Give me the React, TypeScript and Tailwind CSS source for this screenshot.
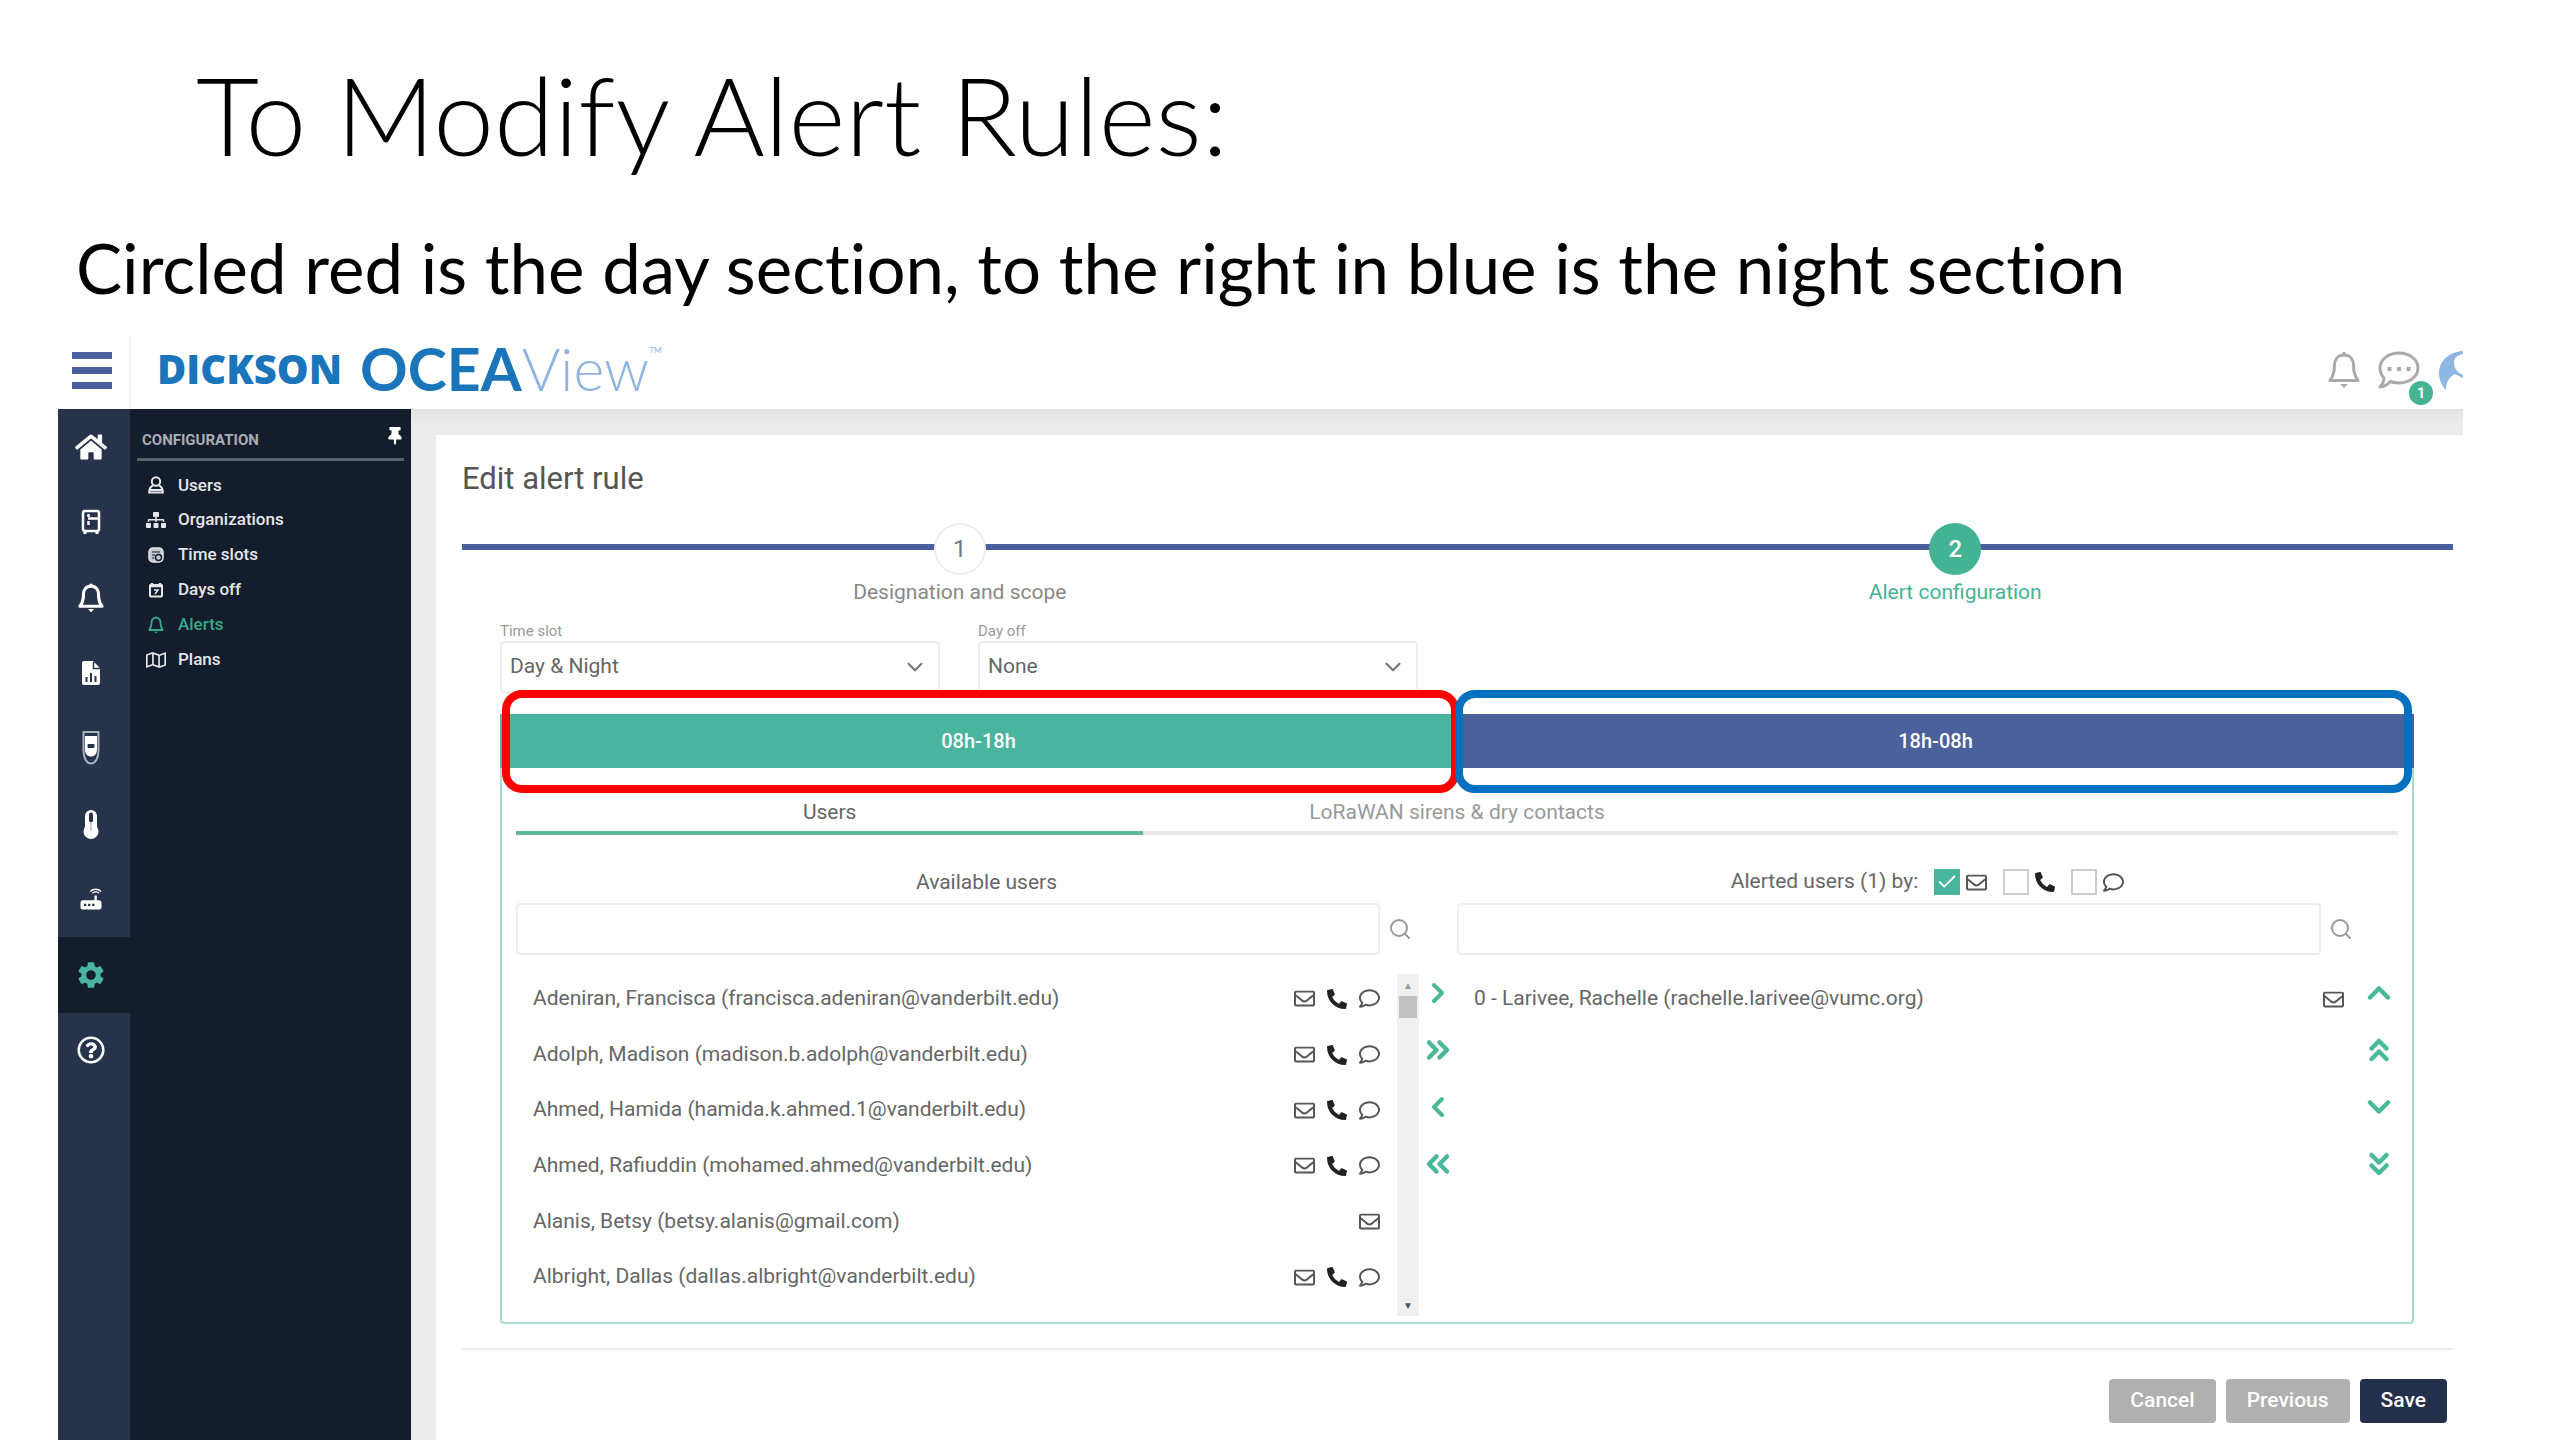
import { useState } from 'react'
import type { ReactNode } from 'react'
import {
  FaHome,
  FaPhoneAlt,
  FaRegComment,
  FaRegEnvelope,
  FaRegMap,
  FaRegQuestionCircle,
  FaSitemap,
  FaThumbtack,
} from 'react-icons/fa'
import { MdRouter, MdSettings } from 'react-icons/md'
import {
  Check,
  ChevronDown,
  ChevronLeft,
  ChevronRight,
  ChevronUp,
  ChevronsDown,
  ChevronsLeft,
  ChevronsRight,
  ChevronsUp,
  Search,
} from 'lucide-react'

type Channel = 'mail' | 'phone' | 'chat'

const availableUsers: { name: string; channels: Channel[] }[] = [
  { name: 'Adeniran, Francisca (francisca.adeniran@vanderbilt.edu)', channels: ['mail', 'phone', 'chat'] },
  { name: 'Adolph, Madison (madison.b.adolph@vanderbilt.edu)', channels: ['mail', 'phone', 'chat'] },
  { name: 'Ahmed, Hamida (hamida.k.ahmed.1@vanderbilt.edu)', channels: ['mail', 'phone', 'chat'] },
  { name: 'Ahmed, Rafiuddin (mohamed.ahmed@vanderbilt.edu)', channels: ['mail', 'phone', 'chat'] },
  { name: 'Alanis, Betsy (betsy.alanis@gmail.com)', channels: ['mail'] },
  { name: 'Albright, Dallas (dallas.albright@vanderbilt.edu)', channels: ['mail', 'phone', 'chat'] },
]

function BellIcon({ className, strokeWidth = 2 }: { className?: string; strokeWidth?: number }) {
  return (
    <svg viewBox="0 0 32 38" className={className} fill="none" stroke="currentColor" strokeWidth={strokeWidth} strokeLinejoin="round">
      <path d="M16 1v3M16 4C9.500 4 6.500 9 6.500 14.500 6.500 22 5 25.500 2 29.500h28c-3-4-4.500-7.500-4.500-15C25.500 9 22.500 4 16 4z" />
      <path d="M12 33h8l-4 4z" fill="currentColor" stroke="none" />
    </svg>
  )
}

function FridgeIcon() {
  return (
    <svg viewBox="0 0 20 26" className="h-[26px] w-5" fill="none" stroke="currentColor" strokeWidth="2.500">
      <rect x="2" y="2" width="16" height="20" rx="2" />
      <path d="M7 9.500h10M7.500 5v3M7.500 12v4" />
      <path d="M4 22v3M16 22v3" strokeWidth="3" />
    </svg>
  )
}

function ReportIcon() {
  return (
    <svg viewBox="0 0 20 26" className="h-[26px] w-5">
      <path d="M3 1h9l7 7v15a2 2 0 0 1-2 2H3a2 2 0 0 1-2-2V3a2 2 0 0 1 2-2z" fill="currentColor" />
      <path d="M12.500 2v6.500H19" fill="none" stroke="#27324b" strokeWidth="1.500" />
      <path d="M5.500 17v5M10 13v9M14.500 16v6" stroke="#27324b" strokeWidth="2" />
    </svg>
  )
}

function SensorIcon() {
  return (
    <svg viewBox="0 0 18 36" className="h-9 w-[18px]">
      <path d="M1.500 2h15v18c0 8-3 13.500-7.500 13.500S1.500 28 1.500 20z" fill="none" stroke="#a9b0be" strokeWidth="2" />
      <path d="M3 6h12v13c0 5-2.500 7.500-6 7.500S3 24 3 19z" fill="currentColor" />
      <rect x="5.500" y="14" width="7" height="4" rx="1" fill="#27324b" />
    </svg>
  )
}

function ThermometerIcon() {
  return (
    <svg viewBox="0 0 16 30" className="h-[30px] w-4">
      <path d="M8 1a6 6 0 0 1 6 6v11a7.500 7.500 0 1 1-12 0V7a6 6 0 0 1 6-6z" fill="currentColor" />
      <path d="M8 5.500v6" stroke="#27324b" strokeWidth="4" strokeLinecap="round" />
      <path d="M8 13v9" stroke="#c9ced8" strokeWidth="2" />
    </svg>
  )
}

function PersonIcon() {
  return (
    <svg viewBox="0 0 16 18" className="h-[18px] w-4" fill="none" stroke="currentColor" strokeWidth="2">
      <circle cx="8" cy="5.500" r="4.200" />
      <path d="M5 9.500C2.500 10.500 1.200 13 1.200 16.500h13.600c0-3.500-1.300-6-3.800-7M2 14h12" />
    </svg>
  )
}

function CalendarIcon({ clock = false }: { clock?: boolean }) {
  return (
    <svg viewBox="0 0 16 16" className="size-4">
      {clock ? (
        <>
          <rect x="1" y="1" width="14" height="14" rx="4" fill="#c4c8cf" stroke="currentColor" strokeWidth="1.500" />
          <path d="M4 5h8" stroke="#141d2b" strokeWidth="1" />
          <circle cx="10.500" cy="10.500" r="3" fill="none" stroke="#141d2b" strokeWidth="1.500" />
          <path d="M4 8h3M4 11h2" stroke="#141d2b" strokeWidth="1" />
        </>
      ) : (
        <>
          <rect x="2" y="3" width="12" height="11.500" rx="1" fill="none" stroke="currentColor" strokeWidth="2" />
          <path d="M1 4h14M4 1v4M12 1v4" stroke="currentColor" strokeWidth="2.500" />
          <path d="M6 8h4l-3 4" fill="none" stroke="currentColor" strokeWidth="1.500" />
        </>
      )}
    </svg>
  )
}

const railItems: { label: string; icon: ReactNode; active?: boolean }[] = [
  { label: 'Home', icon: <FaHome className="size-8" /> },
  { label: 'Equipment', icon: <FridgeIcon /> },
  { label: 'Alarms', icon: <BellIcon className="h-[30px] w-[26px]" strokeWidth={4} /> },
  { label: 'Reports', icon: <ReportIcon /> },
  { label: 'Modules', icon: <SensorIcon /> },
  { label: 'Sensors', icon: <ThermometerIcon /> },
  { label: 'Gateways', icon: <MdRouter className="size-7" /> },
  { label: 'Configuration', icon: <MdSettings className="size-8" />, active: true },
  { label: 'Help', icon: <FaRegQuestionCircle className="size-7" /> },
]

const menuItems: { label: string; icon: ReactNode; active?: boolean }[] = [
  { label: 'Users', icon: <PersonIcon /> },
  { label: 'Organizations', icon: <FaSitemap className="size-5" /> },
  { label: 'Time slots', icon: <CalendarIcon clock /> },
  { label: 'Days off', icon: <CalendarIcon /> },
  { label: 'Alerts', icon: <BellIcon className="h-[18px] w-4" strokeWidth={4} />, active: true },
  { label: 'Plans', icon: <FaRegMap className="size-5" /> },
]

function ChannelIcon({ channel }: { channel: Channel }) {
  if (channel === 'mail') return <FaRegEnvelope className="size-[21px] text-[#555]" />
  if (channel === 'phone') return <FaPhoneAlt className="size-5 text-[#222]" />
  return <FaRegComment className="size-[21px] text-[#555]" />
}

function TopBar() {
  return (
    <header className="flex h-[73px] bg-white">
      <div className="flex w-[73px] items-center border-r-2 border-[#f2f2f2] pb-1 pl-[14px]">
        <button aria-label="Menu" className="flex w-10 flex-col gap-2">
          <span className="h-[7px] bg-[#4a609c]" />
          <span className="h-[7px] bg-[#4a609c]" />
          <span className="h-[7px] bg-[#4a609c]" />
        </button>
      </div>
      <a href="#" className="flex items-center pb-2 pl-[26px] leading-[64px]">
        <span className="font-['Open_Sans'] text-[40px] font-extrabold text-[#1b75bb]">DICKSON</span>
        <span className="ml-[18px] font-['Lato'] text-[59px] font-bold text-[#1b75bb]">OCEA</span>
        <span className="font-['Lato'] text-[59px] font-light text-[#8fb4e0]">View</span>
        <sup className="self-start font-['Lato'] text-[8px] leading-[36px] text-[#8fb4e0]">TM</sup>
      </a>
      <div className="ml-auto flex items-center gap-[18px] pb-[6px] text-[#aaa]">
        <button aria-label="Alarms">
          <BellIcon className="h-[38px] w-8" strokeWidth={3} />
        </button>
        <button aria-label="Messages" className="relative">
          <svg viewBox="0 0 42 38" className="h-[38px] w-[42px]" fill="none" stroke="currentColor" strokeWidth="3">
            <path d="M21 2c10.500 0 19 6.500 19 15s-8.500 15-19 15c-3 0-6-.5-8.500-1.500C9 34 5 36 2 36c2.500-3 4-6 4-9-2.500-2.700-4-6-4-10C2 8.500 10.500 2 21 2z" strokeLinejoin="round" />
            <path d="M9.500 18h4M19 18h4M28.500 18h4" strokeWidth="4" />
          </svg>
          <span className="absolute top-[30px] left-[31px] size-6 rounded-full bg-[#43b394] text-[15px] leading-6 font-bold text-white">1</span>
        </button>
        <svg viewBox="0 0 25 42" className="h-[42px] w-[25px]" aria-hidden="true">
          <path d="M25 2C10 3 1 13 1 24c0 7 3 13 7 17 0-8 3-13 9-16 3 1 5 3 8 4v-3c-4-1.500-9-5.500-9-12.500 0-4 3-7.500 9-8.500z" fill="#8fb6e2" />
        </svg>
      </div>
    </header>
  )
}

function SideNav() {
  return (
    <>
      <nav aria-label="Main" className="w-[72px] bg-[#27324b]">
        <ul className="flex h-[679px] flex-col">
          {railItems.map((item) => (
            <li key={item.label} className={item.active ? 'flex-1 bg-[#141d2b] text-[#4ab59e]' : 'flex-1 text-white'}>
              <a href="#" aria-label={item.label} className="flex h-full items-center justify-center pr-[6px]">
                {item.icon}
              </a>
            </li>
          ))}
        </ul>
      </nav>
      <nav aria-label="Configuration" className="w-[281px] bg-[#141d2b] px-[7px] text-[#e4e6ea]">
        <div className="flex h-[52px] items-start justify-between border-b-3 border-[#5b616b] pt-[18px] pl-[5px]">
          <h2 className="text-[15px] leading-[26px] font-bold text-[#a9adb5]">CONFIGURATION</h2>
          <button aria-label="Pin menu">
            <FaThumbtack className="size-[18px] text-white" />
          </button>
        </div>
        <ul className="mt-[7px] flex h-[209px] flex-col">
          {menuItems.map((item) => (
            <li key={item.label} className="flex-1">
              <a href="#" className={item.active ? 'flex h-full items-center text-[#36a88a]' : 'flex h-full items-center'}>
                <span className="flex w-[41px] justify-center pr-1">{item.icon}</span>
                <span className="text-[17px] font-medium">{item.label}</span>
              </a>
            </li>
          ))}
        </ul>
      </nav>
    </>
  )
}

function Stepper() {
  return (
    <div className="relative mt-6">
      <div className="absolute inset-x-0 top-[21px] h-[6px] bg-[#4a609c]" />
      <ol className="relative grid grid-cols-2 text-center">
        <li>
          <span className="mx-auto block size-[52px] rounded-full border-2 border-[#eee] bg-white text-[24px] leading-[48px] text-[#777]">1</span>
          <span className="mt-[3px] block text-[21px] leading-7 text-[#888]">Designation and scope</span>
        </li>
        <li>
          <span className="mx-auto block size-[52px] rounded-full bg-[#43b394] text-[24px] leading-[52px] font-medium text-white">2</span>
          <span className="mt-[3px] block text-[21px] leading-7 text-[#43b394]">Alert configuration</span>
        </li>
      </ol>
    </div>
  )
}

function SelectField({ id, label, options }: { id: string; label: string; options: string[] }) {
  return (
    <div className="w-[440px]">
      <label htmlFor={id} className="block text-[15px] leading-5 text-[#999]">{label}</label>
      <div className="relative">
        <select id={id} className="h-[52px] w-full appearance-none rounded border-2 border-[#eee] bg-white px-2 text-[21px] text-[#666]">
          {options.map((option) => (
            <option key={option}>{option}</option>
          ))}
        </select>
        <ChevronDown className="pointer-events-none absolute top-[13px] right-3 size-[26px] text-[#777]" />
      </div>
    </div>
  )
}

function SearchField({ label }: { label: string }) {
  return (
    <div className="mt-[5px] flex items-center">
      <input type="text" aria-label={label} className="h-[52px] min-w-0 flex-1 rounded border-2 border-[#eee] px-3 text-[21px]" />
      <button aria-label={`Search ${label}`} className="w-[77px] pl-2">
        <Search className="size-6 text-[#999]" />
      </button>
    </div>
  )
}

function ChannelCheckbox({ channel, label, defaultChecked }: { channel: Channel; label: string; defaultChecked?: boolean }) {
  return (
    <label className="flex items-center gap-[6px]">
      <span className="grid">
        <input
          type="checkbox"
          aria-label={label}
          defaultChecked={defaultChecked}
          className="peer col-start-1 row-start-1 size-[26px] appearance-none border-2 border-[#ccc] checked:border-[#4ab59e] checked:bg-[#4ab59e]"
        />
        <Check className="pointer-events-none invisible col-start-1 row-start-1 size-[22px] place-self-center text-white peer-checked:visible" />
      </span>
      <ChannelIcon channel={channel} />
    </label>
  )
}

function ArrowButtons({ items }: { items: { label: string; icon: ReactNode }[] }) {
  return (
    <div className="-mt-[7px] flex w-[38px] shrink-0 flex-col text-[#4ab999]">
      {items.map((item) => (
        <button key={item.label} aria-label={item.label} className="flex h-[57px] items-center justify-center">
          {item.icon}
        </button>
      ))}
    </div>
  )
}

function UserPicker() {
  return (
    <div className="mt-[31px] grid grid-cols-2">
      <section>
        <h3 className="text-center text-[21px] leading-8 text-[#666]">Available users</h3>
        <SearchField label="available users" />
        <div className="mt-4 flex">
          <ul className="flex h-[334px] min-w-0 flex-1 flex-col pl-[17px]">
            {availableUsers.map((user) => (
              <li key={user.name} className="flex flex-1 items-center gap-3 text-[21px] text-[#666]">
                <span className="mr-auto">{user.name}</span>
                {user.channels.map((channel) => (
                  <ChannelIcon key={channel} channel={channel} />
                ))}
              </li>
            ))}
          </ul>
          <div className="mt-[3px] ml-[17px] flex h-[342px] w-[22px] flex-col items-center bg-[#f0f0f0]">
            <span className="flex h-[22px] items-center text-[10px] text-[#999]">▲</span>
            <span className="h-[22px] w-[18px] bg-[#c1c1c1]" />
            <span className="mt-auto flex h-[22px] items-center text-[10px] text-[#555]">▼</span>
          </div>
          <ArrowButtons
            items={[
              { label: 'Add', icon: <ChevronRight className="size-8" strokeWidth={3} /> },
              { label: 'Add all', icon: <ChevronsRight className="size-9" strokeWidth={3} /> },
              { label: 'Remove', icon: <ChevronLeft className="size-8" strokeWidth={3} /> },
              { label: 'Remove all', icon: <ChevronsLeft className="size-9" strokeWidth={3} /> },
            ]}
          />
        </div>
      </section>

      <section>
        <div className="flex h-8 items-center justify-center gap-4 text-[21px] text-[#666]">
          <h3>Alerted users (1) by:</h3>
          <ChannelCheckbox channel="mail" label="Email" defaultChecked />
          <ChannelCheckbox channel="phone" label="Phone" />
          <ChannelCheckbox channel="chat" label="Text message" />
        </div>
        <SearchField label="alerted users" />
        <div className="mt-4 flex gap-4">
          <ul className="min-w-0 flex-1 pl-[17px]">
            <li className="flex h-14 items-center justify-between text-[21px] text-[#666]">
              <span>0 - Larivee, Rachelle (rachelle.larivee@vumc.org)</span>
              <ChannelIcon channel="mail" />
            </li>
          </ul>
          <ArrowButtons
            items={[
              { label: 'Move up', icon: <ChevronUp className="size-9" strokeWidth={3} /> },
              { label: 'Move to top', icon: <ChevronsUp className="size-9" strokeWidth={3} /> },
              { label: 'Move down', icon: <ChevronDown className="size-9" strokeWidth={3} /> },
              { label: 'Move to bottom', icon: <ChevronsDown className="size-9" strokeWidth={3} /> },
            ]}
          />
        </div>
      </section>
    </div>
  )
}

function AlertPanel() {
  const [tab, setTab] = useState<'users' | 'sirens'>('users')

  return (
    <div className="mr-[39px] ml-[38px]">
      <div className="flex gap-[38px] pt-[15px]">
        <SelectField id="time-slot" label="Time slot" options={['Day & Night']} />
        <SelectField id="day-off" label="Day off" options={['None']} />
      </div>

      <div className="mt-[21px] grid grid-cols-2 text-[20px] font-medium text-white">
        <div className="relative">
          <button className="h-[54px] w-full bg-[#4ab59e]">08h-18h</button>
          <div className="pointer-events-none absolute -top-6 -right-[2px] -bottom-[25px] left-[2px] rounded-[20px] border-8 border-[#ff0000]" />
        </div>
        <div className="relative">
          <button className="h-[54px] w-full bg-[#4b619b]">18h-08h</button>
          <div className="pointer-events-none absolute -top-6 right-[2px] -bottom-[25px] -left-[2px] rounded-[20px] border-8 border-[#0070c0]" />
        </div>
      </div>

      <div className="rounded-b border-2 border-t-0 border-[#a8dccb] px-[14px] pt-7 pb-[6px]">
        <div role="tablist" className="grid grid-cols-3 items-end text-[21px]">
          <button
            role="tab"
            aria-selected={tab === 'users'}
            onClick={() => setTab('users')}
            className={tab === 'users' ? 'h-[39px] border-b-4 border-[#5ab99c] pb-[2px] text-[#666]' : 'h-[39px] border-b-4 border-[#e8e8e8] pb-[2px] text-[#999]'}
          >
            Users
          </button>
          <button
            role="tab"
            aria-selected={tab === 'sirens'}
            onClick={() => setTab('sirens')}
            className={tab === 'sirens' ? 'h-[39px] border-b-4 border-[#5ab99c] pb-[2px] text-[#666]' : 'h-[39px] border-b-4 border-[#e8e8e8] pb-[2px] text-[#999]'}
          >
            LoRaWAN sirens &amp; dry contacts
          </button>
          <div className="h-1 bg-[#e8e8e8]" />
        </div>
        <UserPicker />
      </div>
    </div>
  )
}

export default function App() {
  return (
    <div className="flex min-h-screen flex-col bg-white pr-[97px] pl-[58px] font-['Roboto',sans-serif]">
      <h1 className="pt-[42px] pl-[138px] font-['Lato',sans-serif] text-[109px] leading-[144px] font-light text-black">To Modify Alert Rules:</h1>
      <p className="pt-[34px] pb-5 pl-[18px] font-['Lato',sans-serif] text-[69px] leading-[96px] text-black [font-variant-ligatures:none]">
        Circled red is the day section, to the right in blue is the night section
      </p>

      <TopBar />
      <div className="flex flex-1">
        <SideNav />
        <div className="min-w-0 flex-1 bg-gradient-to-b from-[#e2e2e2] to-[#ececec] to-[14px] pt-[26px] pl-[25px]">
          <main className="h-full bg-white pt-6 pr-[10px] pb-4 pl-[26px]">
            <h2 className="text-[31px] leading-10 text-[#555]">Edit alert rule</h2>
            <Stepper />
            <AlertPanel />
            <footer className="mt-6 flex justify-end gap-[10px] border-t-2 border-[#eee] pt-[29px] pr-[6px] text-[21px] font-medium text-white">
              <button className="h-11 rounded bg-[#b0b0b0] px-[21px]">Cancel</button>
              <button className="h-11 rounded bg-[#b0b0b0] px-[21px]">Previous</button>
              <button className="h-11 rounded bg-[#242f4b] px-[21px]">Save</button>
            </footer>
          </main>
        </div>
      </div>
    </div>
  )
}
